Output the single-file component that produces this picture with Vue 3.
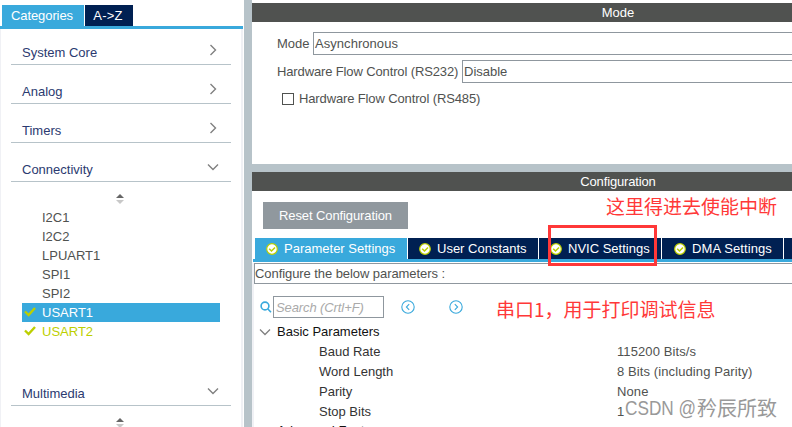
<template>
  <div class="app">
    <aside class="sidebar">
      <nav class="side-tabs">
        <button class="side-tab active" type="button">Categories</button>
        <button class="side-tab az" type="button">A-&gt;Z</button>
      </nav>
      <div class="side-body">
        <section v-for="cat in categories" :key="cat.name">
          <header class="cat-header">
            <span>{{ cat.name }}</span>
            <svg v-if="cat.open" class="cat-chevron" width="12" height="12" viewBox="0 0 12 12">
              <path d="M1 3.5 L6 8.5 L11 3.5" />
            </svg>
            <svg v-else class="cat-chevron" width="12" height="12" viewBox="0 0 12 12">
              <path d="M3.5 1 L8.5 6 L3.5 11" />
            </svg>
          </header>
          <div v-if="cat.open" class="cat-content">
            <svg class="sorter" width="8" height="10" viewBox="0 0 8 10">
              <path d="M4 0 L8 4 H0 Z" fill="#666" />
              <path d="M0 6 H8 L4 10 Z" fill="#c8c8c8" />
            </svg>
            <ul class="items">
              <li
                v-for="item in cat.items"
                :key="item.name"
                class="item"
                :class="{ selected: item.selected, enabled: item.enabled }"
              >
                <span class="mark">
                  <svg v-if="item.enabled" width="12" height="10" viewBox="0 0 12 10">
                    <path d="M1 4.5 L4.6 8 L11 1" />
                  </svg>
                </span>
                {{ item.name }}
              </li>
            </ul>
          </div>
        </section>
      </div>
    </aside>

    <main class="main">
      <section class="mode">
        <h2 class="bar">Mode</h2>
        <div class="field">
          <label class="l-mode">Mode</label>
          <div class="select async">Asynchronous</div>
        </div>
        <div class="field">
          <label class="l-flow">Hardware Flow Control (RS232)</label>
          <div class="select">Disable</div>
        </div>
        <div class="check-row">
          <span class="checkbox"></span>
          <span>Hardware Flow Control (RS485)</span>
        </div>
      </section>

      <section class="config">
        <h2 class="bar">Configuration</h2>
        <button class="reset" type="button">Reset Configuration</button>
        <nav class="tabs">
          <button
            v-for="tab in tabs"
            :key="tab.key"
            class="tab"
            :class="[tab.key, { active: tab.active }]"
            type="button"
          >
            <svg width="12" height="12" viewBox="0 0 12 12">
              <circle cx="6" cy="6" r="5.3" />
              <path d="M3.2 5.7 L5.5 8 L9 4.4" />
            </svg>
            <span>{{ tab.label }}</span>
          </button>
          <span class="tab-rest"></span>
        </nav>
        <div class="panel">
          <div class="hint">Configure the below parameters :</div>
          <div class="search-row">
            <svg class="lens" width="12" height="12" viewBox="0 0 12 12">
              <circle cx="5" cy="5" r="3.9" />
              <path d="M7.9 8 L11 11.2" />
            </svg>
            <div class="search">Search (Crtl+F)</div>
            <svg class="nav-btn" width="14" height="14" viewBox="0 0 14 14">
              <circle cx="7" cy="7" r="6.2" />
              <path d="M8.2 4.2 L5.4 7 L8.2 9.8" />
            </svg>
            <svg class="nav-btn next" width="14" height="14" viewBox="0 0 14 14">
              <circle cx="7" cy="7" r="6.2" />
              <path d="M5.8 4.2 L8.6 7 L5.8 9.8" />
            </svg>
          </div>
          <div class="tree">
            <div class="group">
              <svg width="12" height="12" viewBox="0 0 12 12">
                <path d="M1 3.5 L6 8.5 L11 3.5" />
              </svg>
              Basic Parameters
            </div>
            <div v-for="p in params" :key="p.name" class="param">
              <span class="p-name">{{ p.name }}</span>
              <span class="p-value">{{ p.value }}</span>
            </div>
            <div class="group last">
              <svg width="12" height="12" viewBox="0 0 12 12">
                <path d="M1 3.5 L6 8.5 L11 3.5" />
              </svg>
              Advanced Features
            </div>
          </div>
        </div>
      </section>
    </main>

    <div class="note-box"></div>
    <div class="note note-nvic">这里得进去使能中断</div>
    <div class="note note-usart">串口1，用于打印调试信息</div>
    <div class="watermark"><span class="wm-latin">CSDN @</span><span>矜辰所致</span></div>
  </div>
</template>

<script setup>
const categories = [
  { name: 'System Core' },
  { name: 'Analog' },
  { name: 'Timers' },
  {
    name: 'Connectivity',
    open: true,
    items: [
      { name: 'I2C1' },
      { name: 'I2C2' },
      { name: 'LPUART1' },
      { name: 'SPI1' },
      { name: 'SPI2' },
      { name: 'USART1', enabled: true, selected: true },
      { name: 'USART2', enabled: true },
    ],
  },
  { name: 'Multimedia', open: true, items: [] },
]

const tabs = [
  { key: 'parameter', label: 'Parameter Settings', active: true },
  { key: 'user', label: 'User Constants' },
  { key: 'nvic', label: 'NVIC Settings' },
  { key: 'dma', label: 'DMA Settings' },
]

const params = [
  { name: 'Baud Rate', value: '115200 Bits/s' },
  { name: 'Word Length', value: '8 Bits (including Parity)' },
  { name: 'Parity', value: 'None' },
  { name: 'Stop Bits', value: '1' },
]
</script>

<style>
body {
  margin: 0;
  overflow: hidden;
}
</style>

<style scoped>
.app {
  position: relative;
  display: flex;
  width: 792px;
  height: 427px;
  overflow: hidden;
  background: #fff;
  font-family: "Liberation Sans", Arial, "Noto Sans CJK SC", sans-serif;
  font-size: 13px;
  color: #505250;
}

.app * {
  box-sizing: border-box;
}

button {
  border: 0;
  padding: 0;
  font: inherit;
  color: #fff;
  white-space: nowrap;
}

svg {
  display: block;
  flex: none;
  fill: none;
}

/* sidebar */
.sidebar {
  width: 244px;
  flex: none;
  padding-top: 5px;
}

.side-tabs {
  display: flex;
  gap: 1px;
  width: 243px;
  height: 24px;
  padding-left: 2px;
  border-bottom: 3px solid #39a9dc;
}

.side-tab {
  width: 82px;
  padding-right: 2px;
  background: #39a9dc;
  letter-spacing: -0.1px;
}

.side-tab.az {
  width: 48px;
  background: #002052;
  letter-spacing: 0.2px;
}

.side-body {
  width: 243px;
  height: 398px;
  padding: 0 10px;
  border-left: 1px solid #f0f1f5;
  border-right: 2px solid #f0f1f5;
}

.cat-header {
  display: flex;
  align-items: flex-end;
  justify-content: space-between;
  width: 220px;
  height: 39px;
  padding: 0 12px 3px 11px;
  border-bottom: 1px solid #b7c3c9;
  color: #2b3a70;
  line-height: 16px;
}

section:first-child > .cat-header {
  height: 36px;
}

.cat-chevron {
  margin-bottom: 5px;
  stroke: #808080;
  stroke-width: 1.4;
}

.cat-content {
  height: 185px;
  padding-top: 12px;
}

.sorter {
  margin: 0 0 4px 105px;
}

.items {
  margin: 0;
  padding: 0 0 0 11px;
  list-style: none;
}

.item {
  display: flex;
  width: 198px;
  height: 19px;
  line-height: 19px;
}

.mark {
  width: 20px;
  padding: 4px 0 0 2px;
}

.mark svg {
  stroke: #bccf00;
  stroke-width: 2.4;
}

.item.enabled {
  color: #bccf00;
}

.item.selected {
  background: #39a9dc;
  color: #fff;
}

/* right side */
.main {
  flex: 1;
  min-width: 0;
  border-left: 8px solid #b7c3c9;
}

/* the pane runs past the window edge, its title is centred on the full width */
.bar {
  margin: 0;
  height: 19px;
  padding-left: 192px;
  background: #505250;
  color: #fff;
  font-size: 13px;
  font-weight: 400;
  line-height: 19px;
  text-align: center;
}

.config .bar {
  letter-spacing: -0.15px;
}

.mode {
  height: 172px;
  padding-top: 3px;
  border-bottom: 8px solid #b7c3c9;
}

.field {
  display: flex;
  height: 23px;
  margin: 10px 0 0 25px;
  line-height: 23px;
}

.field + .field {
  margin-top: 5px;
}

.l-mode {
  width: 36px;
}

.l-flow {
  width: 185px;
  letter-spacing: -0.13px;
  white-space: nowrap;
}

.select {
  flex: 1;
  padding-left: 1px;
  border: 1px solid #8f979e;
  border-right: 0;
  line-height: 21px;
}

.async {
  letter-spacing: 0.05px;
}

.check-row {
  display: flex;
  align-items: center;
  gap: 5px;
  height: 16px;
  margin: 7px 0 0 30px;
  letter-spacing: -0.13px;
}

.checkbox {
  width: 12px;
  height: 12px;
  margin-top: 1px;
  border: 1px solid #505250;
}

.reset {
  display: block;
  width: 145px;
  height: 27px;
  margin: 12px 0 0 11px;
  background: #90989e;
  letter-spacing: -0.1px;
}

.mode + .config .reset {
  margin-top: 11px;
}

.tabs {
  display: flex;
  gap: 1px;
  height: 24px;
  margin: 9px 0 0 1px;
  padding-left: 2px;
  border-bottom: 3px solid #39a9dc;
}

.tab {
  display: flex;
  flex: none;
  align-items: center;
  gap: 6px;
  padding-left: 11px;
  background: #002052;
}

.tab circle {
  fill: #fff;
  stroke: #bccf00;
  stroke-width: 1.2;
}

.tab path {
  stroke: #bccf00;
  stroke-width: 1.5;
}

.tab.active {
  background: #39a9dc;
}

.parameter {
  width: 152px;
}

.user {
  width: 130px;
}

.nvic {
  width: 122px;
}

.dma {
  width: 121px;
  padding-left: 12px;
  letter-spacing: 0.1px;
}

.tab-rest {
  flex: 1;
  background: #002052;
}

.panel {
  border-left: 2px solid #f0f1f5;
}

.hint {
  height: 21px;
  margin-top: 1px;
  border: 1px solid #8f979e;
  border-right: 0;
  letter-spacing: -0.07px;
  line-height: 19px;
}

.search-row {
  display: flex;
  align-items: center;
  height: 22px;
  margin: 12px 0 0 6px;
}

.lens {
  stroke: #39a9dc;
  stroke-width: 1.6;
}

.search {
  width: 111px;
  height: 22px;
  margin: 0 17px 0 1px;
  padding-left: 2px;
  border: 1px solid #8f979e;
  color: #aaa;
  font-style: italic;
  letter-spacing: -0.1px;
  line-height: 21px;
}

.nav-btn {
  stroke: #39a9dc;
  stroke-width: 1.1;
}

.nav-btn.next {
  margin-left: 34px;
}

.tree {
  margin: 3px 0 0 5px;
  padding-top: 1px;
  line-height: 20px;
}

.group {
  display: flex;
  align-items: center;
  gap: 6px;
  height: 20px;
  color: #111;
}

.group.last {
  margin-top: -1px;
}

.group svg {
  stroke: #808080;
  stroke-width: 1.3;
}

.param {
  display: flex;
  height: 20px;
  padding-left: 60px;
}

.p-name {
  width: 298px;
  color: #333;
}

.p-value {
  letter-spacing: 0.1px;
}

/* annotations drawn over the window */
.note-box {
  position: absolute;
  left: 548px;
  top: 225px;
  width: 109px;
  height: 41px;
  border: 3px solid #ff3838;
}

.note {
  position: absolute;
  color: #ff3838;
  font-family: "Noto Sans CJK SC", sans-serif;
  font-size: 19px;
  line-height: 24px;
  white-space: nowrap;
}

.note-nvic {
  left: 606px;
  top: 194px;
}

.note-usart {
  left: 496px;
  top: 297px;
}

.watermark {
  position: absolute;
  left: 625px;
  top: 396px;
  display: flex;
  color: #999;
  font-family: "Noto Sans CJK SC", sans-serif;
  font-size: 20px;
  line-height: 24px;
  text-shadow: 1px 1px 0 #fff;
  white-space: nowrap;
}

.wm-latin {
  width: 72px;
  font-family: "Liberation Sans", sans-serif;
  transform: scaleX(0.86);
  transform-origin: 0 50%;
}
</style>
